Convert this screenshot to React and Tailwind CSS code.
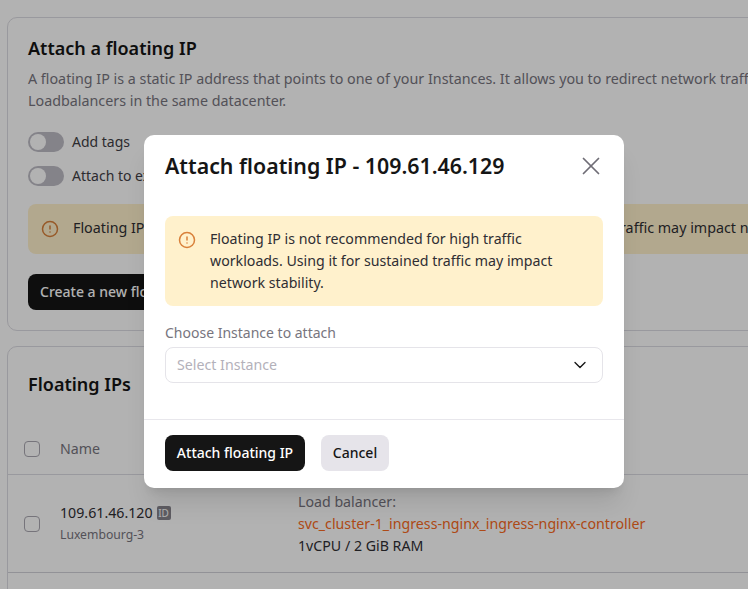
import React from 'react';
import { CircleAlert, X, ChevronDown } from 'lucide-react';

const WARNING = 'Floating IP is not recommended for high traffic workloads. Using it for sustained traffic may impact network stability.';

function Toggle({ label }) {
  return (
    <div className="flex items-center gap-2 h-5">
      <div className="w-9 h-5 rounded-full bg-[#bebcc5] flex items-center pl-[2px]">
        <div className="w-4 h-4 rounded-full bg-white" />
      </div>
      <span className="text-sm text-[#3f3e45]">{label}</span>
    </div>
  );
}

function Checkbox() {
  return <div className="w-4 h-4 rounded-[4px] border border-[#a9a7b0] bg-white shrink-0" />;
}

function Modal() {
  return (
    <div className="absolute left-[144px] top-[135px] w-[480px] bg-white rounded-[10px] shadow-xl">
      <div className="px-[21px] pt-[17px]">
        <div className="flex items-center justify-between">
          <h2 className="text-[21.33px] leading-7 font-semibold text-[#151515] whitespace-nowrap">Attach floating IP - 109.61.46.129</h2>
          <X className="w-[30px] h-[30px] -my-[2px] -mr-[3px] text-[#6f6d76]" strokeWidth={1.4} />
        </div>
        <div className="mt-9 flex gap-[14px] bg-[#fff1cc] rounded-lg px-[13px] py-3">
          <CircleAlert className="w-[18px] h-[18px] mt-[3px] text-[#d9803a] shrink-0" strokeWidth={2} />
          <p className="text-[14.2px] leading-[22px] text-[#2f2e33]">{WARNING}</p>
        </div>
        <label className="block mt-4 text-sm leading-[22px] text-[#77757e]">Choose Instance to attach</label>
        <div className="mt-[3px] h-9 flex items-center justify-between border border-[#e5e4e9] rounded-lg pl-[11px] pr-3">
          <span className="text-[14.2px] text-[#b3b1ba]">Select Instance</span>
          <ChevronDown className="w-5 h-5 text-[#151515]" strokeWidth={1.6} />
        </div>
      </div>
      <div className="mt-9 border-t border-[#e8e7ec] px-[21px] pt-[15px] pb-[17px] flex gap-4">
        <button className="h-9 w-[140px] rounded-lg bg-[#151515] text-white text-sm font-medium">Attach floating IP</button>
        <button className="h-9 w-[68px] rounded-lg bg-[#e6e4ea] text-[#151515] text-sm font-medium">Cancel</button>
      </div>
    </div>
  );
}

export default function App() {
  return (
    <div className="relative h-[589px] w-[748px] overflow-hidden bg-white font-['Noto_Sans',sans-serif]">
      <div className="w-[1300px] pl-[7px] pt-[17px]">
        <section className="border border-[#dcdbe2] rounded-[10px] pl-5 pt-4 pb-5">
          <h1 className="text-lg leading-7 font-semibold text-[#151515]">Attach a floating IP</h1>
          <p className="mt-[6px] text-[14.3px] leading-[22px] text-[#77757e]">
            A floating IP is a static IP address that points to one of your Instances. It allows you to redirect network traffic between Instances or
            <br />
            Loadbalancers in the same datacenter.
          </p>
          <div className="mt-5 flex flex-col gap-[14px]">
            <Toggle label="Add tags" />
            <Toggle label="Attach to existing Instance" />
          </div>
          <div className="mt-[18px] h-[50px] w-[1000px] flex items-center gap-[14px] bg-[#fff1cc] rounded-lg px-[13px] pb-[2px]">
            <CircleAlert className="w-[18px] h-[18px] mt-[2px] text-[#d9803a] shrink-0" strokeWidth={2} />
            <span className="text-[14.3px] text-[#2f2e33]">{WARNING}</span>
          </div>
          <button className="mt-5 h-9 px-3 rounded-lg bg-[#151515] text-white text-sm font-medium">Create a new floating IP</button>
        </section>

        <section className="mt-[15px] border border-[#dcdbe2] rounded-[10px] pt-[23px]">
          <h2 className="pl-5 text-lg leading-7 font-semibold text-[#151515]">Floating IPs</h2>
          <div className="mt-[26px] h-[51px] flex items-center pl-4 border-b border-[#dcdbe2]">
            <Checkbox />
            <span className="ml-5 text-[14.2px] text-[#77757e]">Name</span>
          </div>
          <div className="h-[98px] flex items-center pl-4 border-b border-[#d2d1d9]">
            <Checkbox />
            <div className="ml-5 w-[238px]">
              <div className="flex items-center gap-1">
                <span className="text-[14.2px] leading-[22px] text-[#2f2e33]">109.61.46.120</span>
                <span className="w-[14px] h-[14px] rounded-[2px] bg-[#87858d] text-white text-[10px] leading-[14px] text-center">ID</span>
              </div>
              <div className="text-[12.2px] leading-[22px] text-[#77757e]">Luxembourg-3</div>
            </div>
            <div className="text-[14.2px] leading-[22px]">
              <div className="text-[#77757e]">Load balancer:</div>
              <div className="text-[#f96a22]">svc_cluster-1_ingress-nginx_ingress-nginx-controller</div>
              <div className="text-[#2f2e33]">1vCPU / 2 GiB RAM</div>
            </div>
          </div>
          <div className="h-[100px]" />
        </section>
      </div>

      <div className="absolute inset-0 bg-black/30" />
      <Modal />
    </div>
  );
}
